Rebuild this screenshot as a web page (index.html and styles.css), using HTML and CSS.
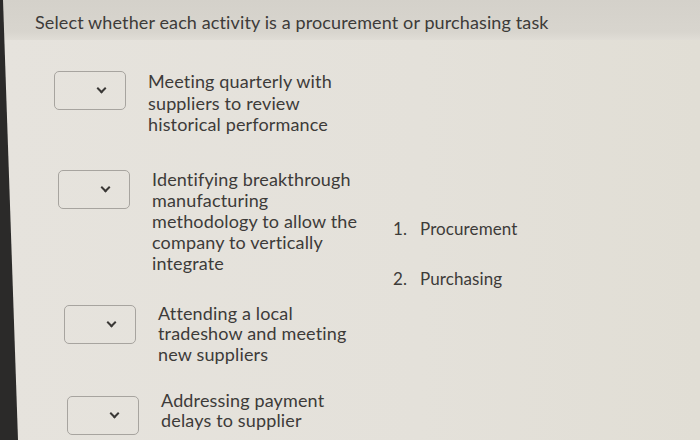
FILE: index.html
```html
<!DOCTYPE html>
<html>
<head>
<meta name="viewport" content="width=device-width, initial-scale=1.0">
<title>Procurement or Purchasing</title>
<link rel="stylesheet" href="styles.css">
</head>
<body>

<div class="screen">
  <div class="prompt">Select whether each activity is a procurement or purchasing task</div>

  <div class="quiz">
    <div class="items">
      <div class="item">
        <div class="pick"><span class="chev"></span></div>
        <div class="text">Meeting quarterly with suppliers to review historical performance</div>
      </div>
      <div class="item">
        <div class="pick"><span class="chev"></span></div>
        <div class="text">Identifying breakthrough manufacturing methodology to allow the company to vertically integrate</div>
      </div>
      <div class="item">
        <div class="pick"><span class="chev"></span></div>
        <div class="text">Attending a local tradeshow and meeting new suppliers</div>
      </div>
      <div class="item">
        <div class="pick"><span class="chev"></span></div>
        <div class="text">Addressing payment delays to supplier</div>
      </div>
    </div>

    <div class="choices">
      <div class="choice"><span class="num">1.</span>Procurement</div>
      <div class="choice"><span class="num">2.</span>Purchasing</div>
    </div>
  </div>

  <div class="bezel"></div>
</div>

</body>
</html>
```

FILE: styles.css
```css
body {
  margin: 0;
  font-family: Lato, "Open Sans", sans-serif;
  color: #3d3b39;
}

.screen {
  position: relative;
  width: 700px;
  height: 440px;
  overflow: hidden;
  background: linear-gradient(to right, #e6e3dd 0%, #e4e1da 60%, #e1ded5 100%);
}

.prompt {
  height: 40px;
  padding-left: 35px;
  line-height: 44px;
  font-size: 18px;
  letter-spacing: 0.12px;
  background: linear-gradient(to bottom, #d4d1ca 0%, #d8d5ce 80%, #e0ddd6 100%);
}

.quiz {
  display: flex;
  align-items: center;
  padding-top: 31px;
}

.items {
  flex: none;
  display: flex;
  flex-direction: column;
  gap: 29px;
  padding-left: 54px;
  width: 300px;
}

.item {
  display: flex;
  align-items: flex-start;
  gap: 22px;
}

/* the photo leans a little, lower rows sit further right */
.item:nth-child(2) { margin-left: 4px; margin-top: 5px; }
.item:nth-child(3) { margin-left: 10px; margin-top: 2px; }
.item:nth-child(4) { margin-left: 13px; margin-top: 3px; }

.item:nth-child(2) .text { width: 224px; line-height: 21px; margin-top: -1px; }
.item:nth-child(3) .text { margin-top: -2px; line-height: 20.5px; }
.item:nth-child(4) .text { margin-top: -6px; line-height: 20px; }

.pick {
  flex: none;
  box-sizing: border-box;
  width: 72px;
  height: 39px;
  border: 1.5px solid #a7a49f;
  border-radius: 5px;
  display: flex;
  align-items: center;
  padding-left: 43px;
}

.chev {
  width: 5px;
  height: 5px;
  border-right: 2px solid #3a3836;
  border-bottom: 2px solid #3a3836;
  transform: translateY(-2px) rotate(45deg);
}

.text {
  flex: none;
  width: 214px;
  font-size: 18px;
  letter-spacing: 0.15px;
  line-height: 21.5px;
}

.choices {
  margin-left: 39px;
  padding-top: 1px;
  font-size: 17px;
  letter-spacing: 0.1px;
  line-height: 21px;
}

.choice {
  display: flex;
}

.choice + .choice {
  margin-top: 29px;
}

.num {
  width: 27px;
}

.bezel {
  position: absolute;
  left: 0;
  top: 0;
  width: 20px;
  height: 440px;
  background: #2b2a29;
  clip-path: polygon(0 0, 3px 0, 18px 440px, 0 440px);
}
```
